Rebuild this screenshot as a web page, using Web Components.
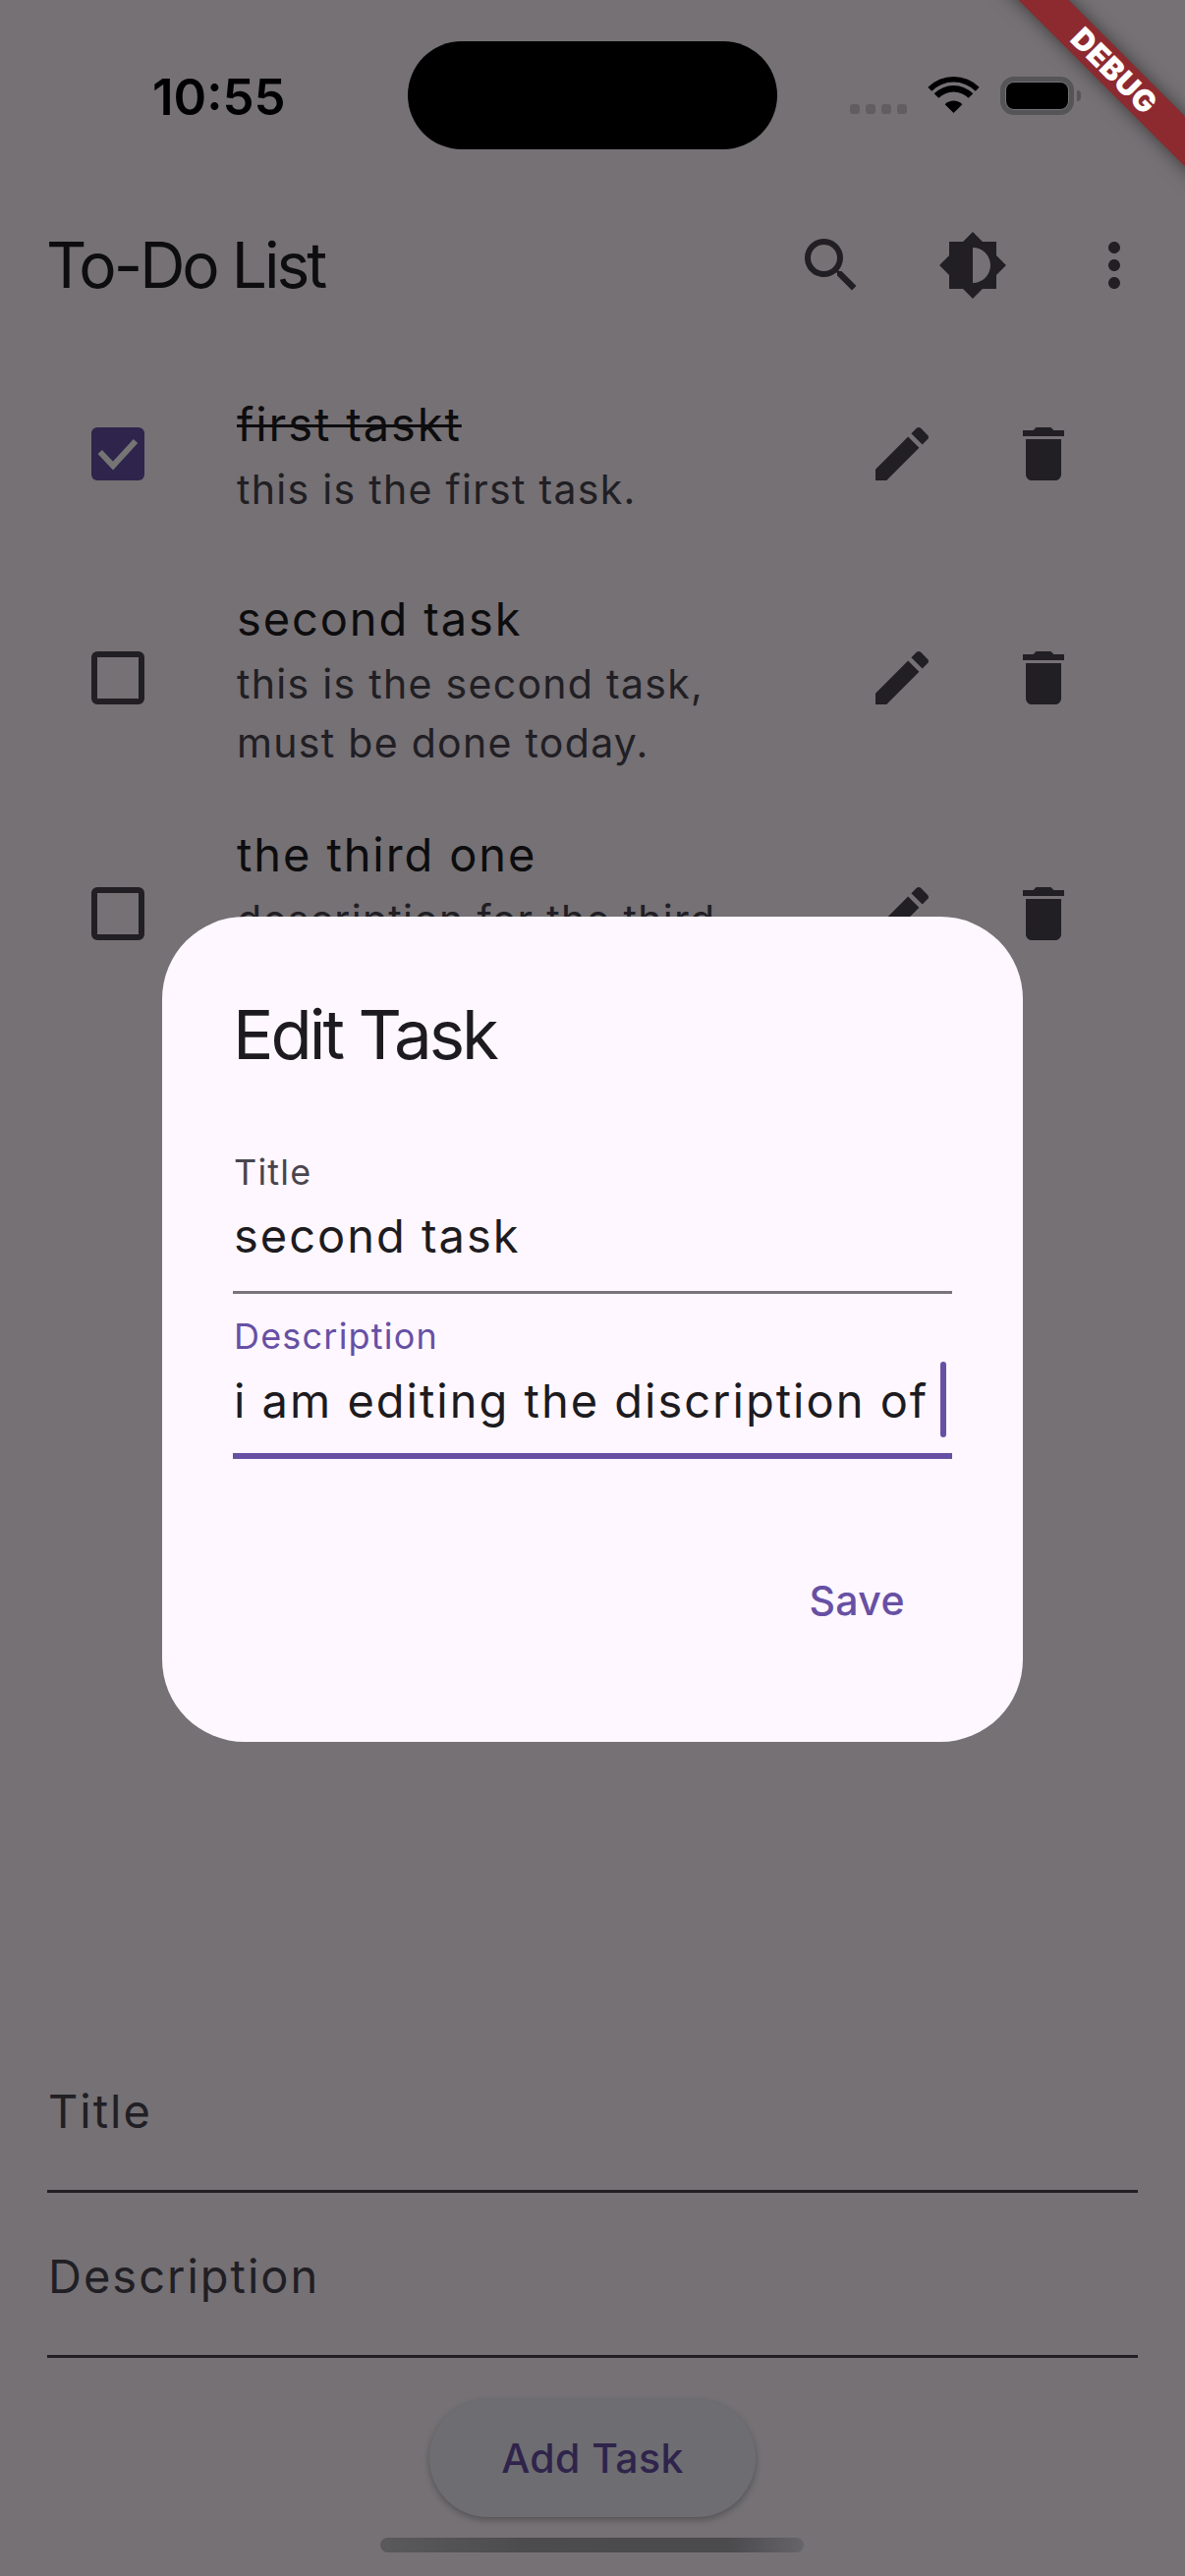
<!DOCTYPE html>
<html lang="en">
<head>
<meta charset="utf-8">
<title>To-Do List</title>
<style>
  html, body { margin: 0; padding: 0; background: #757275; }
  body { font-family: Inter, "Noto Sans", sans-serif; }
</style>
</head>
<body>
<todo-app>
  <status-bar></status-bar>
  <app-bar>To-Do List</app-bar>
  <task-list>
    <task-item checked gap="12"><span slot="title">first taskt</span><span slot="sub">this is the first task.</span></task-item>
    <task-item><span slot="title">second task</span><span slot="sub">this is the second task,<br>must be done today.</span></task-item>
    <task-item lines="2"><span slot="title">the third one</span><span slot="sub">description for the third</span></task-item>
  </task-list>
  <add-form>
    <form-line>Title</form-line>
    <form-line>Description</form-line>
    <add-button>Add Task</add-button>
  </add-form>
  <home-indicator slot="overlay"></home-indicator>
  <modal-scrim slot="overlay">
    <edit-dialog>
      <span slot="heading">Edit Task</span>
      <edit-field label="Title" value="second task"></edit-field>
      <edit-field label="Description" value="i am editing the discription of" focused></edit-field>
      <span slot="action">Save</span>
    </edit-dialog>
  </modal-scrim>
  <debug-banner slot="overlay">DEBUG</debug-banner>
</todo-app>

<script>
const ICONS = {
  search: '<path d="M15.5 14h-.79l-.28-.27C15.41 12.59 16 11.11 16 9.5 16 5.91 13.09 3 9.5 3S3 5.91 3 9.5 5.91 16 9.5 16c1.61 0 3.09-.59 4.23-1.57l.27.28v.79l5 4.99L20.49 19l-4.99-5zm-6 0C7.01 14 5 11.99 5 9.5S7.01 5 9.5 5 14 7.01 14 9.5 11.99 14 9.5 14z"/>',
  brightness: '<path fill-rule="evenodd" d="M20 15.31L23.31 12 20 8.69V4h-4.69L12 .69 8.69 4H4v4.69L.69 12 4 15.31V20h4.69L12 23.31 15.31 20H20v-4.69zM12 18V6c3.31 0 6 2.69 6 6s-2.69 6-6 6z"/>',
  more: '<path d="M12 8c1.1 0 2-.9 2-2s-.9-2-2-2-2 .9-2 2 .9 2 2 2zm0 2c-1.1 0-2 .9-2 2s.9 2 2 2 2-.9 2-2-.9-2-2-2zm0 6c-1.1 0-2 .9-2 2s.9 2 2 2 2-.9 2-2-.9-2-2-2z"/>',
  edit: '<path d="M3 17.25V21h3.75L17.81 9.94l-3.75-3.75L3 17.25zM20.71 7.04c.39-.39.39-1.02 0-1.41l-2.34-2.34c-.39-.39-1.02-.39-1.41 0l-1.83 1.83 3.75 3.75 1.83-1.83z"/>',
  delete: '<path d="M6 19c0 1.1.9 2 2 2h8c1.1 0 2-.9 2-2V7H6v12zM19 4h-3.5l-1-1h-5l-1 1H5v2h14V4z"/>'
};

class Base extends HTMLElement {
  constructor() {
    super();
    this.attachShadow({ mode: 'open' });
  }
  render(css, html) {
    this.shadowRoot.innerHTML = `<style>${css}</style>${html}`;
  }
}

customElements.define('ui-icon', class extends Base {
  connectedCallback() {
    this.render(
      `:host{display:flex;width:144px;height:144px;align-items:center;justify-content:center;color:#49454f;flex:none}
       svg{width:72px;height:72px;fill:currentColor;display:block}`,
      `<svg viewBox="0 0 24 24" aria-hidden="true">${ICONS[this.getAttribute('name')] || ''}</svg>`
    );
  }
});

customElements.define('todo-app', class extends Base {
  connectedCallback() {
    this.render(
      `:host{display:flex;flex-direction:column;position:relative;width:1206px;height:2622px;overflow:hidden;background:#fef7ff;color:#1d1b20;font-family:Inter,"Noto Sans",sans-serif}`,
      `<slot></slot><slot name="overlay"></slot>`
    );
  }
});

customElements.define('status-bar', class extends Base {
  connectedCallback() {
    this.render(
      `:host{display:flex;flex:none;height:186px;align-items:flex-start;padding-left:155px;box-sizing:border-box;color:#000}
       .time{width:260px;margin-top:74px;font:600 51px/50px Inter,sans-serif;letter-spacing:0}
       .island{width:376px;height:110px;margin-top:42px;border-radius:55px;background:#000;flex:none}
       .dots{display:flex;gap:6px;margin:106px 0 0 74px}
       .dots i{width:10px;height:10px;border-radius:3px;background:#d3cdd5}
       svg{display:block;margin:78px 0 0 20px;fill:#000}
       .bat{display:flex;align-items:center;margin:78px 0 0 20px}
       .shell{width:75px;height:39px;box-sizing:border-box;border:5px solid #b9b7bb;border-radius:14px;padding:1px}
       .fill{height:100%;background:#000;border-radius:8px}
       .nub{width:4px;height:11px;margin-left:3px;background:#b9b7bb;border-radius:0 4px 4px 0}`,
      `<div class="time">10:55</div><div class="island"></div>
       <div class="dots"><i></i><i></i><i></i><i></i></div>
       <svg width="55" height="38" viewBox="-2 0 55 38" aria-hidden="true">
         <path d="M-.66 10.84A37 37 0 0 1 51.66 10.84L47.77 14.73A31.5 31.5 0 0 0 3.23 14.73Z"/>
         <path d="M5.7 17.2A28 28 0 0 1 45.3 17.2L40.7 21.8A21.5 21.5 0 0 0 10.3 21.8Z"/>
         <path d="M16.66 28.16A12.5 12.5 0 0 1 34.34 28.16L25.5 37Z"/>
       </svg>
       <div class="bat"><div class="shell"><div class="fill"></div></div><div class="nub"></div></div>`
    );
  }
});

customElements.define('app-bar', class extends Base {
  connectedCallback() {
    this.render(
      `:host{display:flex;flex:none;height:168px;align-items:center;padding:0 0 0 47px;box-sizing:border-box}
       .t{flex:1;font:400 64px/168px Inter,sans-serif;letter-spacing:-3px;color:#1d1b20}
       .actions{display:flex;align-items:center}`,
      `<div class="t"><slot></slot></div>
       <div class="actions"><ui-icon name="search"></ui-icon><ui-icon name="brightness"></ui-icon><ui-icon name="more"></ui-icon></div>`
    );
  }
});

customElements.define('task-list', class extends Base {
  connectedCallback() {
    this.render(`:host{display:flex;flex-direction:column;flex:1;min-height:0;padding-top:12px}`, `<slot></slot>`);
  }
});

customElements.define('task-item', class extends Base {
  connectedCallback() {
    const checked = this.hasAttribute('checked');
    const lines = this.getAttribute('lines') || 1;
    const gap = this.getAttribute('gap') || 0;
    this.render(
      `:host{display:flex;align-items:center;flex:none;padding:24px 72px 24px 48px;margin-bottom:${gap}px}
       .box-wrap{width:144px;height:144px;flex:none;display:flex;align-items:center;justify-content:center}
       .box{width:54px;height:54px;box-sizing:border-box;border-radius:6px;border:6px solid #49454f}
       .box.on{background:#6750a4;border:0}
       .box svg{display:block;width:54px;height:54px}
       .text{flex:1;min-width:0;padding-left:49px}
       .title{font:400 47px/72px Inter,sans-serif;letter-spacing:1.9px;color:#1d1b20;${checked ? 'text-decoration:line-through;text-decoration-thickness:3px;' : ''}}
       .sub{font:400 41px/60px Inter,sans-serif;color:#49454f;letter-spacing:1.3px;min-height:${lines * 60}px}
       .actions{display:flex;flex:none}`,
      `<div class="box-wrap"><div class="box ${checked ? 'on' : ''}">${checked ? '<svg viewBox="0 0 54 54" aria-hidden="true"><path d="M8.7 25L22 39 45 14" fill="none" stroke="#fff" stroke-width="6"/></svg>' : ''}</div></div>
       <div class="text"><div class="title"><slot name="title"></slot></div><div class="sub"><slot name="sub"></slot></div></div>
       <div class="actions"><ui-icon name="edit"></ui-icon><ui-icon name="delete"></ui-icon></div>`
    );
  }
});

customElements.define('add-form', class extends Base {
  connectedCallback() {
    this.render(
      `:host{display:flex;flex-direction:column;flex:none;padding:0 48px 60px}`,
      `<slot></slot>`
    );
  }
});

customElements.define('form-line', class extends Base {
  connectedCallback() {
    this.render(
      `:host{display:flex;align-items:center;height:168px;box-sizing:border-box;border-bottom:3px solid #49454f;padding:5px 0 0 1px;font:400 47px/72px Inter,sans-serif;letter-spacing:2px;color:#49454f}`,
      `<slot></slot>`
    );
  }
});

customElements.define('add-button', class extends Base {
  connectedCallback() {
    this.render(
      `:host{display:flex;align-self:center;align-items:center;justify-content:center;width:332px;height:120px;margin-top:42px;border-radius:60px;background:#f0eef8;box-shadow:0 3px 7px rgba(0,0,0,.28);color:#6750a4;font:500 41px/60px Inter,sans-serif;letter-spacing:.4px}`,
      `<slot></slot>`
    );
  }
});

customElements.define('home-indicator', class extends Base {
  connectedCallback() {
    this.render(
      `:host{position:absolute;left:387px;top:2583px;width:431px;height:15px;border-radius:8px;background:linear-gradient(90deg,#c4c2c8 0,#a5a3a9 35%,#a3a1a7 82%,#dedae4 100%)}`,
      ``
    );
  }
});

customElements.define('modal-scrim', class extends Base {
  connectedCallback() {
    this.render(
      `:host{position:absolute;inset:0;display:flex;align-items:center;justify-content:center;padding-top:84px;box-sizing:border-box;background:rgba(0,0,0,.54)}`,
      `<slot></slot>`
    );
  }
});

customElements.define('edit-dialog', class extends Base {
  connectedCallback() {
    this.render(
      `:host{display:flex;flex-direction:column;width:876px;height:840px;box-sizing:border-box;padding:72px;border-radius:84px;background:#fef7ff}
       .h{font:400 69px/96px Inter,sans-serif;letter-spacing:-3px;color:#1d1b20;margin-bottom:48px}
       .actions{display:flex;justify-content:flex-end;align-items:center;height:144px;margin-top:72px;padding-right:48px;font:500 41px/60px Inter,sans-serif;letter-spacing:.4px;color:#6750a4}`,
      `<div class="h"><slot name="heading"></slot></div>
       <slot></slot>
       <div class="actions"><slot name="action"></slot></div>`
    );
  }
});

customElements.define('edit-field', class extends Base {
  connectedCallback() {
    const focused = this.hasAttribute('focused');
    this.render(
      `:host{display:flex;flex-direction:column;flex:none;height:168px;box-sizing:border-box;padding:${focused ? 19 : 20}px 0 0 1px;border-bottom:${focused ? 6 : 3}px solid ${focused ? '#6750a4' : '#79747e'}}
       .l{font:400 36px/48px Inter,sans-serif;letter-spacing:1.2px;color:${focused ? '#6750a4' : '#49454f'}}
       .v{display:flex;align-items:center;justify-content:space-between;height:72px;margin-top:${focused ? 6 : 5}px;font:400 47px/72px Inter,sans-serif;letter-spacing:2px;color:#1d1b20;white-space:nowrap;padding-right:6px}
       .c{width:6px;height:77px;border-radius:3px;background:#6750a4;flex:none;margin-top:-3px}`,
      `<div class="l">${this.getAttribute('label')}</div>
       <div class="v"><span>${this.getAttribute('value')}</span>${focused ? '<span class="c"></span>' : ''}</div>`
    );
  }
});

customElements.define('debug-banner', class extends Base {
  connectedCallback() {
    this.render(
      `:host{position:absolute;left:934px;top:54px;width:400px;height:36px;transform:rotate(45deg);display:flex;align-items:center;justify-content:center;background:#8d2a2f;box-shadow:0 0 18px rgba(0,0,0,.5);color:#fff;font:900 30.6px/36px Inter,sans-serif;letter-spacing:.5px}`,
      `<slot></slot>`
    );
  }
});
</script>
</body>
</html>
